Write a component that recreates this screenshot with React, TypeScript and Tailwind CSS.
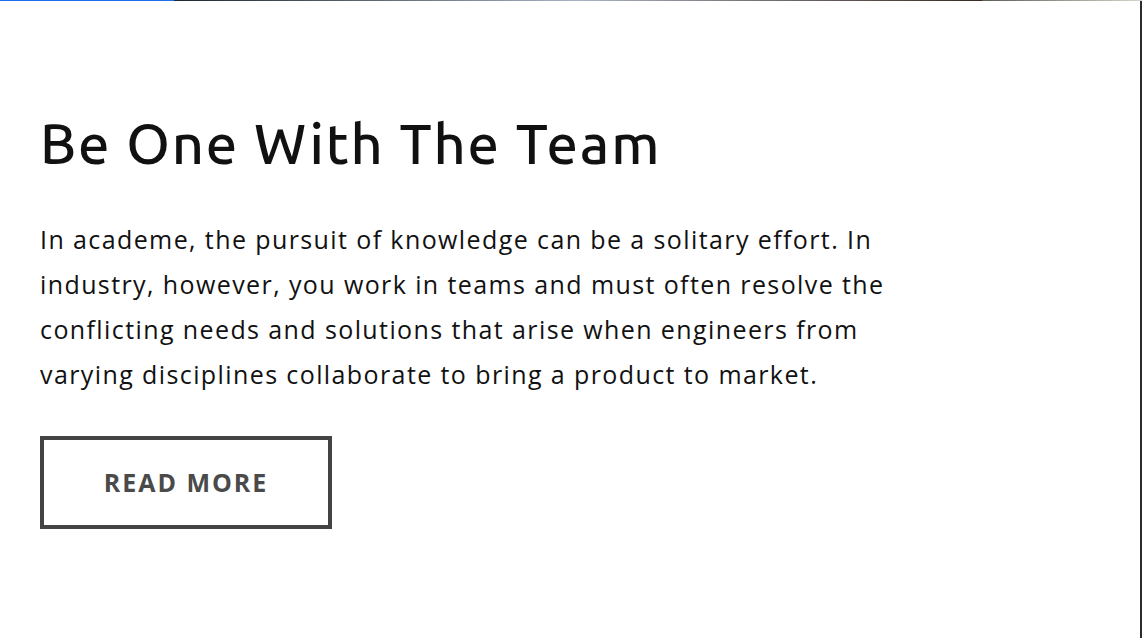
export default function App() {
  return (
    <div className="relative h-[638px] w-[1142px] overflow-hidden bg-white">
      {/* top strip: progress bar over a photo edge */}
      <div className="flex h-px w-full">
        <div className="w-[174px] bg-[#1e6ef0]" />
        <div className="flex-1 bg-gradient-to-r from-[#1c2a30] via-[#a9b3c4] to-[#3a2a1f]" />
        <div className="w-[160px] bg-gradient-to-r from-[#5c5e58] to-[#d8d6cc]" />
      </div>
      <div className="flex h-[637px]">
        <section className="flex-1 pl-10 pt-[105px]">
          <h1 className="font-['Ubuntu','Open_Sans',sans-serif] text-[56px] leading-[76px] font-medium tracking-[1.8px] text-[#111]">
            Be One With The Team
          </h1>
          <p className="mt-[35px] w-[880px] font-['Open_Sans',sans-serif] text-[25px] leading-[45px] tracking-[1.4px] text-[#111]">
            In academe, the pursuit of knowledge can be a solitary effort. In industry, however, you work in teams and
            must often resolve the conflicting needs and solutions that arise when engineers from varying disciplines
            collaborate to bring a product to market.
          </p>
          <button className="mt-[39px] flex h-[93px] w-[292px] items-center justify-center border-4 border-[#444] font-['Open_Sans',sans-serif] text-[25px] font-bold tracking-[2px] text-[#4a4a4a]">
            READ MORE
          </button>
        </section>
        <div className="w-[2px] bg-[#2e2a28]" />
      </div>
    </div>
  )
}
